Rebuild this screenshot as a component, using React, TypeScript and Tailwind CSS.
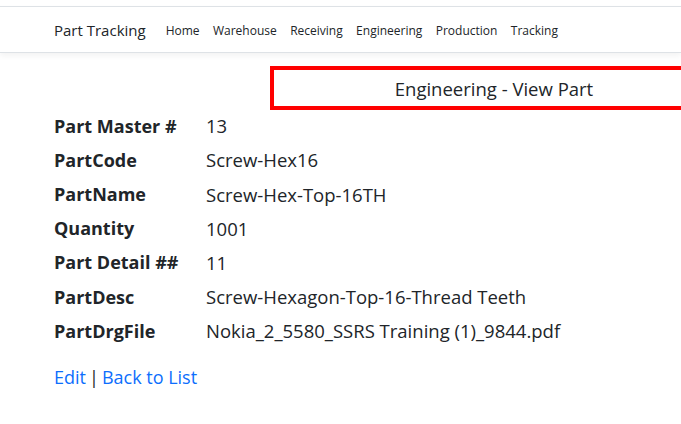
import { useState } from "react";

type Field = {
  label: string;
  value: string;
};

const navLinks = ["Home", "Warehouse", "Receiving", "Engineering", "Production", "Tracking"];

function App() {
  const [fields] = useState<Field[]>([
    { label: "Part Master #", value: "13" },
    { label: "PartCode", value: "Screw-Hex16" },
    { label: "PartName", value: "Screw-Hex-Top-16TH" },
    { label: "Quantity", value: "1001" },
    { label: "Part Detail ##", value: "11" },
    { label: "PartDesc", value: "Screw-Hexagon-Top-16-Thread Teeth" },
    { label: "PartDrgFile", value: "Nokia_2_5580_SSRS Training (1)_9844.pdf" },
  ]);

  return (
    <div
      className="w-[681px] h-[424px] overflow-hidden bg-white text-[#212529]"
      style={{ fontFamily: '"Open Sans", "Noto Sans", sans-serif' }}
    >
      <div className="h-[6px]" />
      <nav className="h-[47px] border-t border-b border-[#dee2e6] shadow-[0_3px_6px_rgba(0,0,0,0.05)] flex items-center px-[54px] pt-[2px]">
        <a className="text-[15px] mr-[20px] text-[#212529]">Part Tracking</a>
        <ul className="flex gap-[13.4px] text-[12px] text-[#212529]">
          {navLinks.map((link) => (
            <li key={link}>
              <a>{link}</a>
            </li>
          ))}
        </ul>
      </nav>

      <div className="px-[54px] pt-[13px]">
        <div className="ml-[216px] w-[448px] h-[44px] border-4 border-[#ff0000] flex items-center justify-center text-[18.5px] pt-[1px]">
          Engineering - View Part
        </div>

        <dl className="-mt-[1px]">
          {fields.map((field) => (
            <div key={field.label} className="flex h-[34.2px] items-center">
              <dt className="w-[152px] font-bold text-[18px]">{field.label}</dt>
              <dd className="text-[18.5px]">{field.value}</dd>
            </div>
          ))}
        </dl>

        <div className="mt-[16px] text-[18px] flex items-center">
          <a className="text-[#0d6efd]">Edit</a>
          <span className="mx-[3px]">|</span>
          <a className="text-[#0d6efd]">Back to List</a>
        </div>
      </div>
    </div>
  );
}

export default App;
